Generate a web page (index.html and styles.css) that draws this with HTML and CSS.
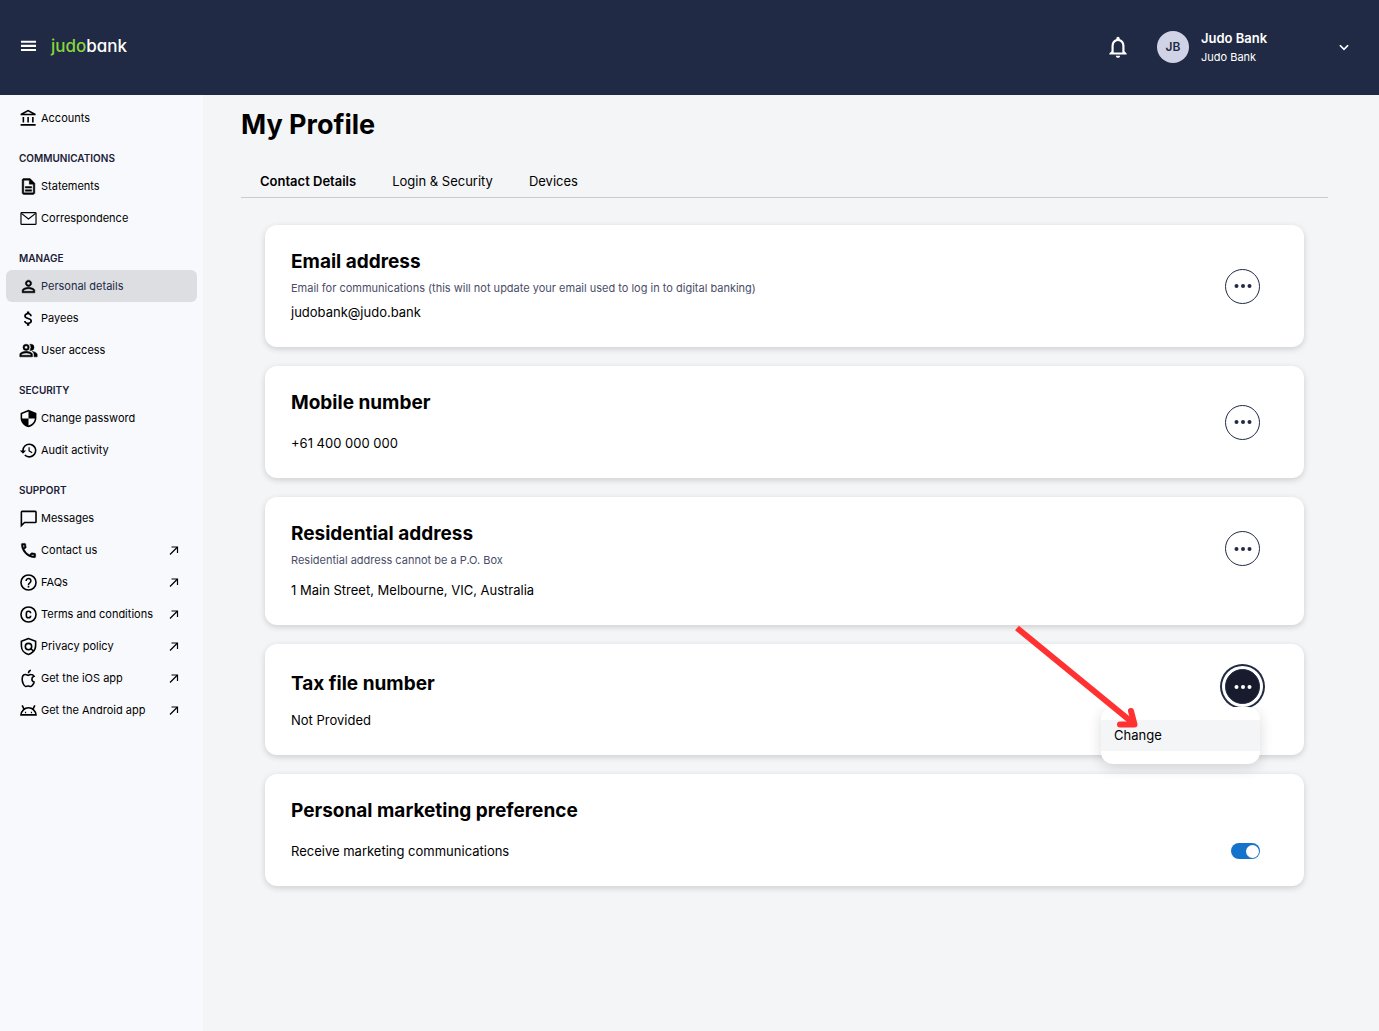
FILE: index.html
```html
<!DOCTYPE html>
<html lang="en">
<head>
<meta charset="utf-8">
<meta name="viewport" content="width=device-width, initial-scale=1">
<title>My Profile - Judo Bank</title>
<link rel="stylesheet" href="styles.css">
</head>
<body>
<header class="topbar">
  <button class="icon-btn" type="button" aria-label="Menu">
    <svg class="icon" viewBox="0 0 24 24"><path d="M2.500 17.800h19v-2.800h-19zm0-5.200h19V9.800h-19zm0-8v2.800h19V4.600z"/></svg>
  </button>
  <a class="logo" href="#"><span class="logo-judo">judo</span>bank</a>
  <button class="icon-btn bell" type="button" aria-label="Notifications">
    <svg class="icon-lg" viewBox="0 0 24 24"><path d="M12 22c1.100 0 2-.9 2-2h-4c0 1.100.9 2 2 2zm6-6v-5c0-3.070-1.630-5.640-4.500-6.320V4c0-.83-.67-1.500-1.500-1.500s-1.500.67-1.500 1.500v.68C7.640 5.360 6 7.920 6 11v5l-2 2v1h16v-1l-2-2zm-2 1H8v-6c0-2.480 1.510-4.500 4-4.500s4 2.020 4 4.500v6z"/></svg>
  </button>
  <button class="account" type="button">
    <span class="avatar">JB</span>
    <span class="account-names"><strong class="account-name">Judo Bank</strong><span class="account-org">Judo Bank</span></span>
    <svg class="chevron" viewBox="0 0 24 24"><path d="M5 9l7 7 7-7"/></svg>
  </button>
</header>
<div class="layout">
  <nav class="sidebar" aria-label="Main">
    <a class="nav-item" href="#"><svg class="icon" viewBox="0 0 24 24"><path d="M6.500 10h-2v7h2v-7zm6 0h-2v7h2v-7zm8.500 9H2v2h19v-2zm-2.500-9h-2v7h2v-7zm-7-6.740L16.710 6H6.290l5.210-2.740m0-2.260L2 6v2h19V6l-9.500-5z"/></svg>Accounts</a>

    <h2 class="nav-title">COMMUNICATIONS</h2>
    <a class="nav-item" href="#"><svg class="icon heavy" viewBox="0 0 24 24"><path d="M8 16h8v2H8zm0-4h8v2H8zm6-10H6c-1.100 0-2 .9-2 2v16c0 1.100.89 2 1.990 2H18c1.100 0 2-.9 2-2V8l-6-6zm4 18H6V4h7v5h5v11z"/></svg>Statements</a>
    <a class="nav-item" href="#"><svg class="icon line thin" viewBox="0 0 24 24"><rect x="2.500" y="4.500" width="19" height="15" rx="1"/><path d="M3 5.500l9 7 9-7"/></svg>Correspondence</a>

    <h2 class="nav-title">MANAGE</h2>
    <a class="nav-item active" href="#" aria-current="page"><svg class="icon heavy" viewBox="0 0 24 24"><path d="M12 5.900a2.100 2.100 0 1 1 0 4.200 2.100 2.100 0 0 1 0-4.200m0 9c2.970 0 6.100 1.460 6.100 2.100v1.100H5.900V17c0-.64 3.130-2.100 6.100-2.100M12 4C9.790 4 8 5.790 8 8s1.790 4 4 4 4-1.790 4-4-1.790-4-4-4zm0 9c-2.670 0-8 1.340-8 4v3h16v-3c0-2.660-5.330-4-8-4z"/></svg>Personal details</a>
    <a class="nav-item" href="#"><svg class="icon" viewBox="0 0 24 24"><path d="M11.800 10.900c-2.270-.59-3-1.200-3-2.150 0-1.090 1.010-1.850 2.700-1.850 1.780 0 2.440.85 2.500 2.100h2.210c-.07-1.720-1.120-3.300-3.210-3.810V3h-3v2.160c-1.940.42-3.500 1.680-3.500 3.610 0 2.310 1.910 3.460 4.700 4.130 2.500.6 3 1.480 3 2.410 0 .69-.49 1.790-2.700 1.790-2.060 0-2.870-.92-2.980-2.100h-2.200c.12 2.190 1.760 3.420 3.680 3.830V21h3v-2.150c1.950-.37 3.500-1.500 3.500-3.550 0-2.840-2.430-3.810-4.700-4.400z"/></svg>Payees</a>
    <a class="nav-item" href="#"><svg class="icon heavy" viewBox="0 0 24 24"><path d="M9 4a4 4 0 1 0 0 8 4 4 0 0 0 0-8zm0 2a2 2 0 1 1 0 4 2 2 0 0 1 0-4zM9 13c-2.670 0-8 1.340-8 4v3h16v-3c0-2.660-5.330-4-8-4zm-6 5v-1c.2-.71 3.300-2 6-2s5.800 1.290 6 2v1H3zM15 12a4 4 0 0 0 0-8c-.47 0-.91.1-1.330.24a5.980 5.980 0 0 1 0 7.520c.42.14.86.24 1.330.24zM16.670 13.130C18.040 14.060 19 15.320 19 17v3h4v-3c0-2.180-3.570-3.470-6.330-3.870z"/></svg>User access</a>

    <h2 class="nav-title">SECURITY</h2>
    <a class="nav-item" href="#"><svg class="icon" viewBox="0 0 24 24"><path d="M12 1L2 5v6c0 5.800 4.100 10.700 10 12 5.900-1.300 10-6.200 10-12V5L12 1zm0 11h8c-.5 4.300-3.700 7.700-8 8.900V12H4V6.300l8-3.200V12z"/></svg>Change password</a>
    <a class="nav-item" href="#"><svg class="icon" viewBox="0 0 24 24"><path d="M13 3a9 9 0 0 0-9 9H1l3.890 3.890.07.14L9 12H6a7 7 0 1 1 2.060 4.940l-1.420 1.420A9 9 0 1 0 13 3zm-1 5v5l4.250 2.520.77-1.280-3.520-2.090V8z"/></svg>Audit activity</a>

    <h2 class="nav-title">SUPPORT</h2>
    <a class="nav-item" href="#"><svg class="icon line" viewBox="0 0 24 24"><path d="M3 21V4a1 1 0 0 1 1-1h16.500a1 1 0 0 1 1 1v12a1 1 0 0 1-1 1H7z"/></svg>Messages</a>
    <a class="nav-item" href="#"><svg class="icon heavy" viewBox="0 0 24 24"><path d="M6.540 5c.06.89.21 1.760.45 2.590l-1.200 1.200c-.41-1.200-.67-2.470-.76-3.790h1.510m9.860 12.020c.85.24 1.720.39 2.600.45v1.490c-1.320-.09-2.590-.35-3.800-.75l1.200-1.190M7.500 3H4c-.55 0-1 .45-1 1 0 9.390 7.610 17 17 17 .55 0 1-.45 1-1v-3.490c0-.55-.45-1-1-1-1.240 0-2.450-.2-3.570-.57a1.020 1.020 0 0 0-1.020.24l-2.200 2.200a15.150 15.150 0 0 1-6.590-6.590l2.200-2.200c.28-.28.36-.67.25-1.020A11.360 11.360 0 0 1 8.500 4c0-.55-.45-1-1-1z"/></svg>Contact us<svg class="ext" viewBox="0 0 12 12"><path d="M2 10.500l7.500-7.500M3.500 3h6v6"/></svg></a>
    <a class="nav-item" href="#"><svg class="icon line" viewBox="0 0 24 24"><circle cx="12" cy="12" r="9.500"/><path d="M9 10a3 3 0 1 1 4.600 2.500C12.500 13.200 12 13.700 12 15M12 16.200v2"/></svg>FAQs<svg class="ext" viewBox="0 0 12 12"><path d="M2 10.500l7.500-7.500M3.500 3h6v6"/></svg></a>
    <a class="nav-item" href="#"><svg class="icon line" viewBox="0 0 24 24"><circle cx="12" cy="12" r="9.500"/><path d="M14.700 10.500a2.700 2.700 0 0 0-5.400 0v3a2.700 2.700 0 0 0 5.400 0"/></svg>Terms and conditions<svg class="ext" viewBox="0 0 12 12"><path d="M2 10.500l7.500-7.500M3.500 3h6v6"/></svg></a>
    <a class="nav-item" href="#"><svg class="icon line" viewBox="0 0 24 24"><path d="M12 2L3 5.500V11c0 5.200 3.700 9.700 9 11 2-.5 3.700-1.500 5.200-2.900C19.500 17 21 14.200 21 11V5.500z"/><circle cx="12" cy="12" r="4"/><path d="M14.800 14.800l3.800 3.200"/></svg>Privacy policy<svg class="ext" viewBox="0 0 12 12"><path d="M2 10.500l7.500-7.500M3.500 3h6v6"/></svg></a>
    <a class="nav-item" href="#"><svg class="icon line" viewBox="0 0 24 24"><path d="M8.300 7C5 7 4 10.200 4 12.900 4 16.200 6.100 22 8.300 22c1.200 0 1.800-.6 3.200-.6s1.600.6 3.200.6c1.700 0 4.300-3.400 4.300-5.600 0 0-2.700-.6-2.700-3.800 0-2.400 2.700-3.400 2.700-3.400C17.900 7.500 15.900 7 15.200 7c-1.500-.1-3 1-3.700 1S9.500 7 8.300 7z"/><path d="M12 5.500c0-2 1-3.500 3-4"/></svg>Get the iOS app<svg class="ext" viewBox="0 0 12 12"><path d="M2 10.500l7.500-7.500M3.500 3h6v6"/></svg></a>
    <a class="nav-item" href="#"><svg class="icon line" viewBox="0 0 24 24"><path d="M2.500 17.500C3 12.500 7 8.500 12 8.500s9 4 9.500 9zM6.500 10.500L4 5.500M17.500 10.500l2.500-5"/><path d="M7.500 14.500h1.500M15 14.500h1.500"/></svg>Get the Android app<svg class="ext" viewBox="0 0 12 12"><path d="M2 10.500l7.500-7.500M3.500 3h6v6"/></svg></a>
  </nav>

  <main class="main">
    <h1 class="page-title">My Profile</h1>
    <div class="tabs" role="tablist">
      <button class="tab selected" type="button" role="tab" aria-selected="true">Contact Details</button>
      <button class="tab" type="button" role="tab" aria-selected="false">Login &amp; Security</button>
      <button class="tab" type="button" role="tab" aria-selected="false">Devices</button>
    </div>
    <div class="cards">
      <section class="card">
        <div class="card-body">
          <h2 class="card-title">Email address</h2>
          <p class="card-note">Email for communications (this will not update your email used to log in to digital banking)</p>
          <p class="card-value">judobank@judo.bank</p>
        </div>
        <button class="more" type="button" aria-label="Email address options"><svg class="dots" viewBox="0 0 18 4"><circle cx="2.500" cy="2" r="2"/><circle cx="9" cy="2" r="2"/><circle cx="15.500" cy="2" r="2"/></svg></button>
      </section>
      <section class="card">
        <div class="card-body spaced">
          <h2 class="card-title">Mobile number</h2>
          <p class="card-value">+61 400 000 000</p>
        </div>
        <button class="more" type="button" aria-label="Mobile number options"><svg class="dots" viewBox="0 0 18 4"><circle cx="2.500" cy="2" r="2"/><circle cx="9" cy="2" r="2"/><circle cx="15.500" cy="2" r="2"/></svg></button>
      </section>
      <section class="card card-address">
        <div class="card-body">
          <h2 class="card-title">Residential address</h2>
          <p class="card-note">Residential address cannot be a P.O. Box</p>
          <p class="card-value">1 Main Street, Melbourne, VIC, Australia</p>
        </div>
        <button class="more" type="button" aria-label="Residential address options"><svg class="dots" viewBox="0 0 18 4"><circle cx="2.500" cy="2" r="2"/><circle cx="9" cy="2" r="2"/><circle cx="15.500" cy="2" r="2"/></svg></button>
      </section>
      <section class="card card-tax">
        <div class="card-body">
          <h2 class="card-title">Tax file number</h2>
          <p class="card-value">Not Provided</p>
        </div>
        <div class="more-wrap">
          <button class="more open" type="button" aria-label="Tax file number options" aria-expanded="true"><svg class="dots" viewBox="0 0 18 4"><circle cx="2.500" cy="2" r="2"/><circle cx="9" cy="2" r="2"/><circle cx="15.500" cy="2" r="2"/></svg></button>
          <div class="menu" role="menu"><button class="menu-item" type="button" role="menuitem">Change</button></div>
          <svg class="pointer" viewBox="0 0 130 108" aria-hidden="true"><path d="M5 4L121 99"/><path class="pointer-head" d="M108 100.500L122.500 100.500 119 87"/></svg>
        </div>
      </section>
      <section class="card">
        <div class="card-body spaced">
          <h2 class="card-title">Personal marketing preference</h2>
          <div class="switch-row">
            <label class="card-value" for="marketing">Receive marketing communications</label>
            <input class="switch" id="marketing" type="checkbox" role="switch" checked>
          </div>
        </div>
      </section>
    </div>
  </main>
</div>
</body>
</html>
```
FILE: styles.css
```css
* { box-sizing: border-box; }

body {
  margin: 0;
  min-height: 100vh;
  display: flex;
  flex-direction: column;
  background: #f4f5f7;
  color: #000;
  font-family: Inter, "Liberation Sans", sans-serif;
  font-size: 13px;
}

h1, h2, p { margin: 0; }
a { color: inherit; text-decoration: none; }
button {
  padding: 0;
  border: 0;
  background: none;
  color: inherit;
  font: inherit;
  cursor: pointer;
}
svg { display: block; flex: none; }

.icon { width: 19px; height: 19px; fill: currentColor; }
.icon-lg { width: 26px; height: 26px; fill: currentColor; }
.heavy { stroke: currentColor; stroke-width: .6; }
.line { fill: none; stroke: currentColor; stroke-width: 2; }
.thin { stroke-width: 1.5; }

/* Top bar */
.topbar {
  display: flex;
  align-items: center;
  height: 95px;
  padding: 0 28px 2px 19px;
  background: #202a44;
  color: #fff;
}
.logo {
  margin-left: 13px;
  padding-bottom: 2px;
  font-size: 17px;
  line-height: 24px;
  font-weight: 500;
  font-feature-settings: "cv11", "ss03";
}
.logo-judo { color: #87d73c; }
.bell { margin-left: auto; }
.account {
  display: flex;
  align-items: center;
  width: 194px;
  margin-left: 26px;
  text-align: left;
}
.avatar {
  display: grid;
  place-items: center;
  width: 32px;
  height: 32px;
  border-radius: 50%;
  background: #d0d2e5;
  color: #202a44;
  font-size: 12px;
  font-weight: 600;
}
.account-names { display: grid; margin: 2px auto 0 12px; }
.account-name { font-size: 13px; line-height: 19px; font-weight: 600; }
.account-org { font-size: 11px; line-height: 18px; }
.chevron {
  width: 14px;
  height: 14px;
  fill: none;
  stroke: currentColor;
  stroke-width: 3;
}

/* Page frame */
.layout { display: flex; flex: 1; }

.sidebar {
  flex: none;
  width: 203px;
  padding: 7px 6px;
  background: #f8f9fc;
}
.nav-item {
  display: flex;
  align-items: center;
  gap: 3px;
  height: 32px;
  padding: 0 17px 0 13px;
  border-radius: 6px;
  font-size: 11px;
}
.nav-item.active { background: #dddee2; color: #202a44; }
.nav-item.active .icon { color: #000; }
.nav-title {
  height: 36px;
  padding: 16px 13px 0;
  color: #1b2036;
  font-size: 10px;
  line-height: 16px;
  font-weight: 600;
}
.ext {
  width: 12px;
  height: 12px;
  margin-left: auto;
  fill: none;
  stroke: currentColor;
  stroke-width: 1.2;
}

.main { flex: 1; min-width: 0; padding: 12px 51px 40px 38px; }
.page-title { font-size: 27px; line-height: 36px; font-weight: 700; }

.tabs {
  display: flex;
  margin-top: 24px;
  padding-left: 1px;
  border-bottom: 1px solid #c8cad6;
}
.tab { padding: 4px 18px 6px; line-height: 20px; }
.tab.selected { font-weight: 600; }

/* Cards */
.cards {
  display: grid;
  gap: 19px;
  padding: 27px 24px 0;
}
.card {
  display: flex;
  align-items: center;
  padding: 25px 44px 25px 26px;
  border-radius: 12px;
  background: #fff;
  box-shadow: 0 2px 6px rgba(0, 0, 0, .16);
}
.card-body { display: grid; flex: 1; gap: 6px; }
.card-body.spaced { gap: 18px; }
.card-title { font-size: 19px; line-height: 24px; font-weight: 700; }
.card-note { color: #4a4d68; font-size: 11px; line-height: 16px; }
.card-value { font-size: 13px; line-height: 20px; }

.card-address { align-items: flex-start; }
.card-address .card-value { padding-top: 6px; }
.card-address .more { margin-top: 9px; }
.card-tax { align-items: flex-start; }
.card-tax .card-body { gap: 14px; padding-top: 3px; }

.more {
  display: grid;
  place-items: center;
  width: 35px;
  height: 35px;
  border: 1px solid #202a44;
  border-radius: 50%;
  background: #fff;
  color: #202a44;
}
.more.open {
  background: #171b2d;
  color: #fff;
  box-shadow: 0 0 0 3px #fff, 0 0 0 5px #202a44;
}
.dots { width: 18px; height: 4px; fill: currentColor; }
.more-wrap { position: relative; }
.menu {
  position: absolute;
  top: 38px;
  right: 0;
  width: 159px;
  padding: 13px 0;
  border-radius: 12px;
  background: #fff;
  box-shadow: 0 4px 14px rgba(0, 0, 0, .14);
  clip-path: inset(0 -24px -24px -24px);
}
.menu-item {
  width: 100%;
  padding: 0 13px;
  background: #f4f5f7;
  line-height: 31px;
  text-align: left;
}
.pointer {
  position: absolute;
  top: -45px;
  right: 118px;
  width: 130px;
  height: 108px;
  fill: none;
  stroke: #ff3131;
  stroke-width: 6;
  pointer-events: none;
}
.pointer-head { stroke-linecap: round; stroke-linejoin: round; }

.switch-row { display: flex; align-items: center; justify-content: space-between; }
.switch {
  appearance: none;
  display: flex;
  align-items: center;
  width: 29px;
  height: 16px;
  margin: 0;
  padding: 0 1px;
  border-radius: 8px;
  background: #a5a8b8;
}
.switch::before {
  content: "";
  width: 13px;
  height: 13px;
  border-radius: 50%;
  background: #fff;
}
.switch:checked { justify-content: flex-end; background: #1673cc; }
```
